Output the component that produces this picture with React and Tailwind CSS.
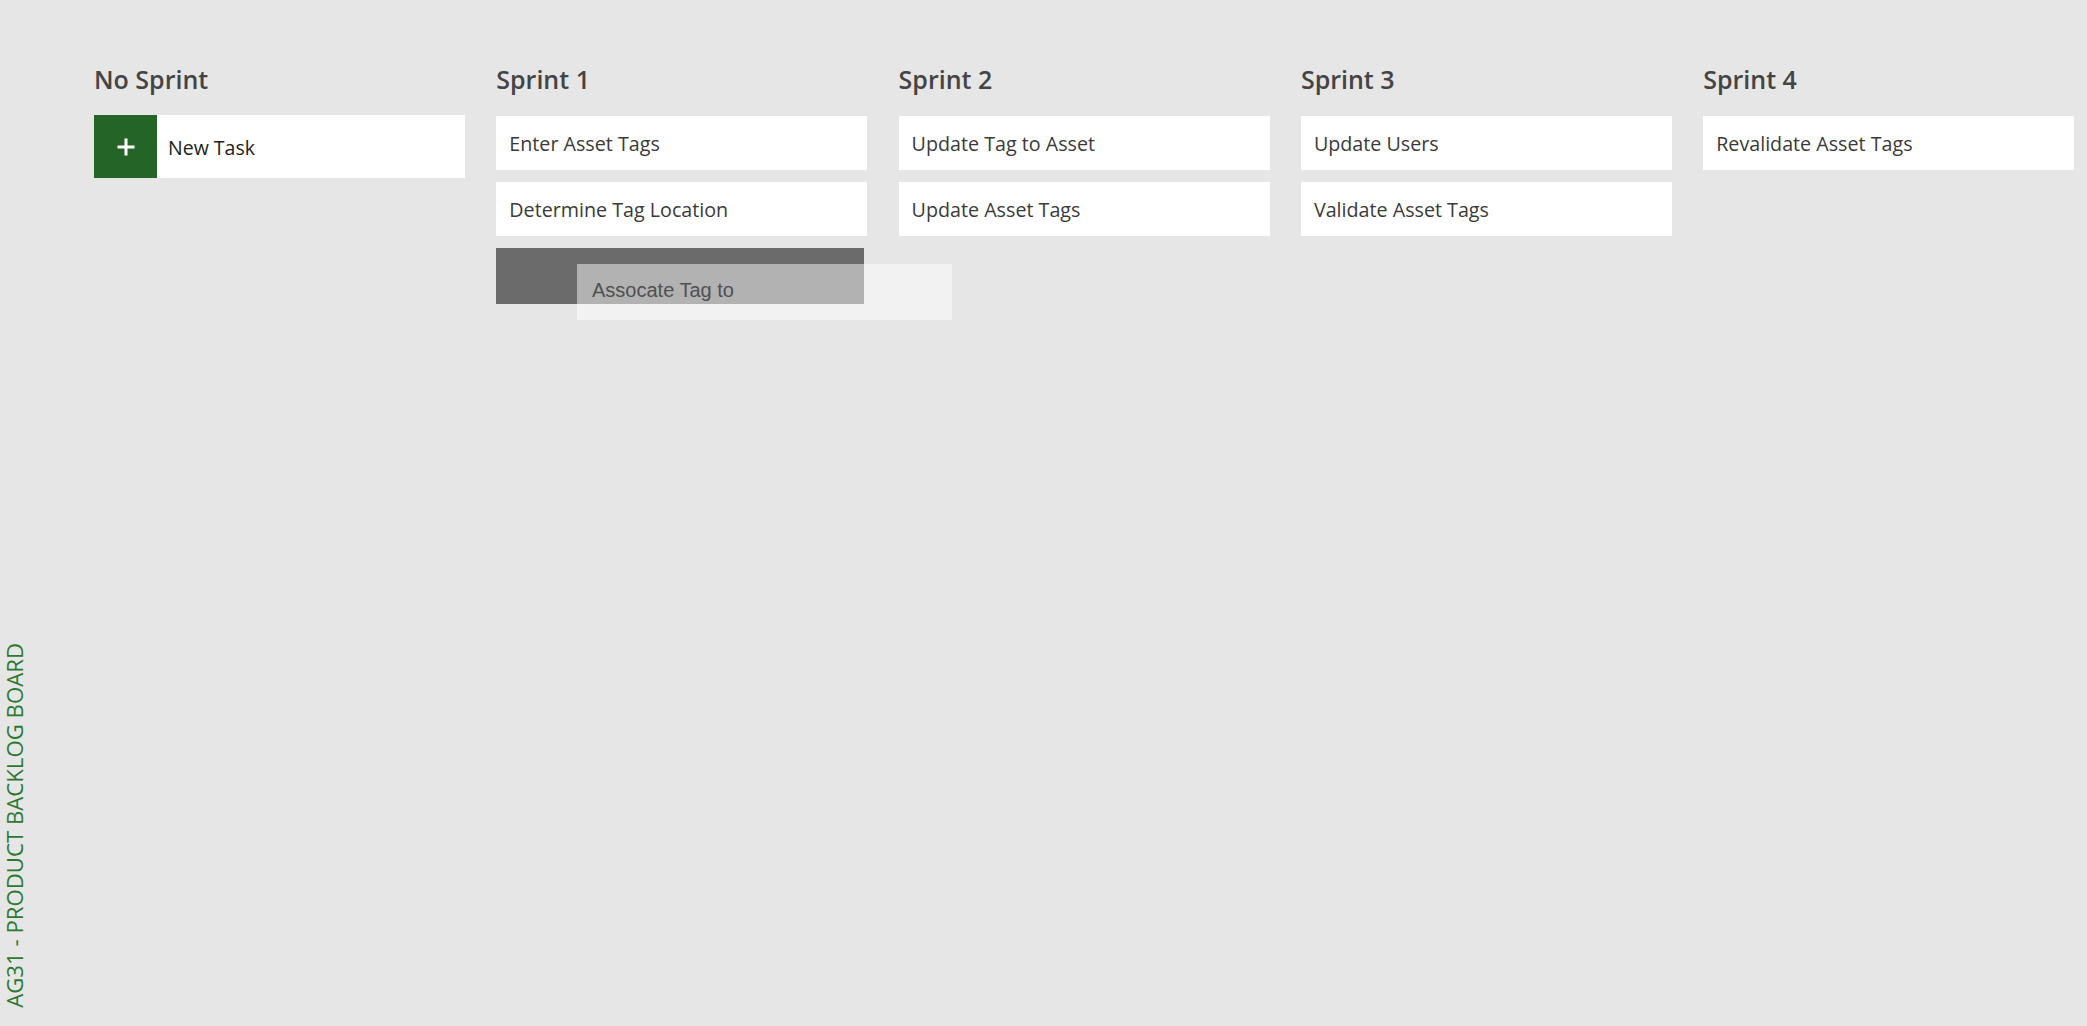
import React from "react";

const columns = [
  { title: "No Sprint", tasks: [], isNew: true },
  { title: "Sprint 1", tasks: ["Enter Asset Tags", "Determine Tag Location"], placeholder: true },
  { title: "Sprint 2", tasks: ["Update Tag to Asset", "Update Asset Tags"] },
  { title: "Sprint 3", tasks: ["Update Users", "Validate Asset Tags"] },
  { title: "Sprint 4", tasks: ["Revalidate Asset Tags"] },
];

function PlusIcon() {
  return (
    <svg width="18" height="18" viewBox="0 0 18 18" fill="none">
      <path d="M9 0.5V17.5M0.5 9H17.5" stroke="#ffffff" strokeWidth="3" />
    </svg>
  );
}

export default function App() {
  return (
    <div
      className="relative flex w-[2087px] h-[1026px] overflow-hidden bg-[#e6e6e6]"
      style={{ fontFamily: '"Open Sans", "Noto Sans", sans-serif' }}
    >
      {/* left rail with vertical title */}
      <div className="w-[94px] h-[1026px] shrink-0 flex flex-col justify-end pb-[18px]">
        <div className="[writing-mode:vertical-rl] rotate-180 text-[22.2px] leading-[30px] text-[#2b7a2f] whitespace-nowrap">
          AG31 - PRODUCT BACKLOG BOARD
        </div>
      </div>

      {/* board */}
      <div className="flex gap-[31.3px] pt-[63px]">
        {columns.map((col) => (
          <div key={col.title} className="w-[371px] flex flex-col">
            <div className="h-[32px] leading-[32px] text-[25px] font-semibold text-[#444444] mb-[21px] whitespace-nowrap">
              {col.title}
            </div>
            {col.isNew ? (
              <div className="-mt-px flex h-[63px] bg-white">
                <div className="w-[63px] h-[63px] bg-[#256427] flex items-center justify-center">
                  <PlusIcon />
                </div>
                <div className="flex items-center pl-[11px] pt-[2px] text-[19.5px] text-[#222222]">New Task</div>
              </div>
            ) : (
              <div className="flex flex-col gap-[12px]">
                {col.tasks.map((t) => (
                  <div
                    key={t}
                    className="h-[54px] bg-white flex items-center pl-[13px] pt-[2px] text-[19.7px] text-[#3a3a3a] whitespace-nowrap"
                  >
                    {t}
                  </div>
                ))}
                {col.placeholder && <div className="w-[368px] h-[56px] bg-[#6b6b6b]" />}
              </div>
            )}
          </div>
        ))}
      </div>

      {/* dragged card ghost */}
      <div
        className="absolute left-[577px] top-[264px] w-[375px] h-[56px] bg-[rgba(255,255,255,0.48)] flex items-center pl-[15px] pb-[5px] text-[20px] text-[#505050]"
        style={{ fontFamily: '"Liberation Sans", Arial, sans-serif' }}
      >
        Assocate Tag to
      </div>
    </div>
  );
}
